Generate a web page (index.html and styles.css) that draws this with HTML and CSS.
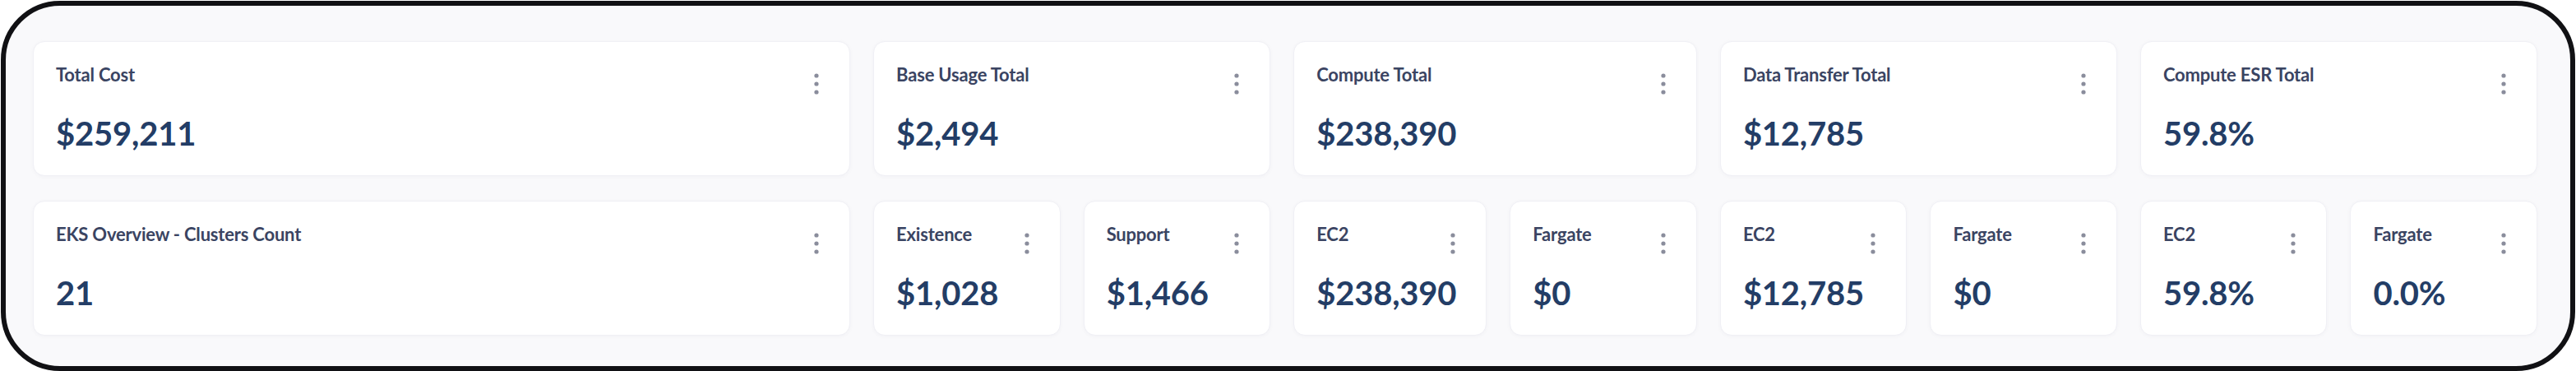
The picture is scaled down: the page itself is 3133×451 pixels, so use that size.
FILE: index.html
```html
<!DOCTYPE html>
<html lang="en">
<head>
<meta charset="utf-8">
<title>Cost Overview</title>
<link rel="stylesheet" href="styles.css">
</head>
<body>
<div class="frame">
  <div class="grid">
    <div class="card span4"><div class="head"><span class="label">Total Cost</span><svg class="kebab" width="8" height="28" viewBox="0 0 8 28"><circle cx="4" cy="4" r="2.6"/><circle cx="4" cy="14" r="2.6"/><circle cx="4" cy="24" r="2.6"/></svg></div><div class="value">$259,211</div></div>
    <div class="card span2"><div class="head"><span class="label">Base Usage Total</span><svg class="kebab" width="8" height="28" viewBox="0 0 8 28"><circle cx="4" cy="4" r="2.6"/><circle cx="4" cy="14" r="2.6"/><circle cx="4" cy="24" r="2.6"/></svg></div><div class="value">$2,494</div></div>
    <div class="card span2"><div class="head"><span class="label">Compute Total</span><svg class="kebab" width="8" height="28" viewBox="0 0 8 28"><circle cx="4" cy="4" r="2.6"/><circle cx="4" cy="14" r="2.6"/><circle cx="4" cy="24" r="2.6"/></svg></div><div class="value">$238,390</div></div>
    <div class="card span2"><div class="head"><span class="label">Data Transfer Total</span><svg class="kebab" width="8" height="28" viewBox="0 0 8 28"><circle cx="4" cy="4" r="2.6"/><circle cx="4" cy="14" r="2.6"/><circle cx="4" cy="24" r="2.6"/></svg></div><div class="value">$12,785</div></div>
    <div class="card span2"><div class="head"><span class="label">Compute ESR Total</span><svg class="kebab" width="8" height="28" viewBox="0 0 8 28"><circle cx="4" cy="4" r="2.6"/><circle cx="4" cy="14" r="2.6"/><circle cx="4" cy="24" r="2.6"/></svg></div><div class="value">59.8%</div></div>

    <div class="card span4"><div class="head"><span class="label">EKS Overview - Clusters Count</span><svg class="kebab" width="8" height="28" viewBox="0 0 8 28"><circle cx="4" cy="4" r="2.6"/><circle cx="4" cy="14" r="2.6"/><circle cx="4" cy="24" r="2.6"/></svg></div><div class="value">21</div></div>
    <div class="card"><div class="head"><span class="label">Existence</span><svg class="kebab" width="8" height="28" viewBox="0 0 8 28"><circle cx="4" cy="4" r="2.6"/><circle cx="4" cy="14" r="2.6"/><circle cx="4" cy="24" r="2.6"/></svg></div><div class="value">$1,028</div></div>
    <div class="card"><div class="head"><span class="label">Support</span><svg class="kebab" width="8" height="28" viewBox="0 0 8 28"><circle cx="4" cy="4" r="2.6"/><circle cx="4" cy="14" r="2.6"/><circle cx="4" cy="24" r="2.6"/></svg></div><div class="value">$1,466</div></div>
    <div class="card"><div class="head"><span class="label">EC2</span><svg class="kebab" width="8" height="28" viewBox="0 0 8 28"><circle cx="4" cy="4" r="2.6"/><circle cx="4" cy="14" r="2.6"/><circle cx="4" cy="24" r="2.6"/></svg></div><div class="value">$238,390</div></div>
    <div class="card"><div class="head"><span class="label">Fargate</span><svg class="kebab" width="8" height="28" viewBox="0 0 8 28"><circle cx="4" cy="4" r="2.6"/><circle cx="4" cy="14" r="2.6"/><circle cx="4" cy="24" r="2.6"/></svg></div><div class="value">$0</div></div>
    <div class="card"><div class="head"><span class="label">EC2</span><svg class="kebab" width="8" height="28" viewBox="0 0 8 28"><circle cx="4" cy="4" r="2.6"/><circle cx="4" cy="14" r="2.6"/><circle cx="4" cy="24" r="2.6"/></svg></div><div class="value">$12,785</div></div>
    <div class="card"><div class="head"><span class="label">Fargate</span><svg class="kebab" width="8" height="28" viewBox="0 0 8 28"><circle cx="4" cy="4" r="2.6"/><circle cx="4" cy="14" r="2.6"/><circle cx="4" cy="24" r="2.6"/></svg></div><div class="value">$0</div></div>
    <div class="card"><div class="head"><span class="label">EC2</span><svg class="kebab" width="8" height="28" viewBox="0 0 8 28"><circle cx="4" cy="4" r="2.6"/><circle cx="4" cy="14" r="2.6"/><circle cx="4" cy="24" r="2.6"/></svg></div><div class="value">59.8%</div></div>
    <div class="card"><div class="head"><span class="label">Fargate</span><svg class="kebab" width="8" height="28" viewBox="0 0 8 28"><circle cx="4" cy="4" r="2.6"/><circle cx="4" cy="14" r="2.6"/><circle cx="4" cy="24" r="2.6"/></svg></div><div class="value">0.0%</div></div>
  </div>
</div>
</body>
</html>
```

FILE: styles.css
```css
* { box-sizing: border-box; }
html, body {
  margin: 0;
  padding: 0;
  background: #ffffff;
}
body {
  width: 3133px;
  height: 451px;
  padding: 1px 1px 0 1px;
  font-family: Lato, "Noto Sans", sans-serif;
}
.frame {
  width: 100%;
  height: 450px;
  border: 6px solid #111114;
  border-radius: 72px;
  background: #f9f9fb;
  padding: 43px 40px 0 33px;
}
.grid {
  display: grid;
  grid-template-columns: repeat(12, 1fr);
  grid-auto-rows: 164px;
  column-gap: 28px;
  row-gap: 30px;
}
.card {
  background: #ffffff;
  border: 1px solid #f0f0f5;
  border-radius: 14px;
  box-shadow: 0 1px 5px rgba(30, 30, 80, 0.035);
  padding: 27px 36px 0 27px;
  display: flex;
  flex-direction: column;
}
.span4 { grid-column: span 4; }
.span2 { grid-column: span 2; }
.head {
  display: flex;
  justify-content: space-between;
  align-items: flex-start;
  height: 60px;
}
.label {
  font-size: 22px;
  line-height: 26px;
  font-weight: 700;
  color: #3a4462;
  letter-spacing: -0.2px;
}
.kebab {
  fill: #8a8d9c;
  margin-top: 10px;
}
.value {
  font-size: 40px;
  line-height: 48px;
  font-weight: 700;
  color: #233d66;
  letter-spacing: -0.2px;
}
```
